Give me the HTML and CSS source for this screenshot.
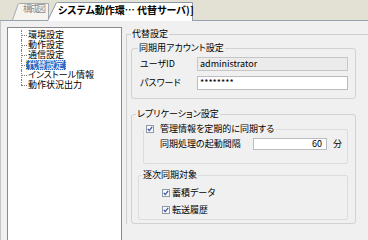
FILE: index.html
```html
<!DOCTYPE html>
<html lang="ja">
<head>
    <meta charset="UTF-8">
    <title>代替設定</title>
    <link rel="stylesheet" href="styles.css">
</head>
<body>
    <div class="tabstrip">
        <div class="tab tab-off">
            <svg class="tab-shape" width="37" height="17" viewBox="0 0 37 17"><path d="M0.5 17 L6 1.5 Q6.4 0.5 7.5 0.5 H36.5 V17" fill="#f5f4ef" stroke="#a4abb3"/></svg>
            <span class="tab-label">構成図</span>
        </div>
        <div class="tab tab-on">
            <svg class="tab-shape" width="146" height="19" viewBox="0 0 146 19"><path d="M0.5 19 L9 1.5 Q9.4 0.5 10.5 0.5 H145.5 V19" fill="#fff" stroke="#8d99a8"/></svg>
            <span class="tab-label">システム動作環… 代替サーバ)]</span>
        </div>
    </div>

    <div class="main">
        <div class="tree">
            <ul>
                <li><span>環境設定</span></li>
                <li><span>動作設定</span></li>
                <li><span>通信設定</span></li>
                <li class="selected"><span>代替設定</span></li>
                <li><span>インストール情報</span></li>
                <li><span>動作状況出力</span></li>
            </ul>
        </div>

        <div class="pane">
            <fieldset class="frame">
                <legend>代替設定</legend>

                <fieldset class="group account">
                    <legend>同期用アカウント設定</legend>
                    <div class="field">
                        <span class="field-label">ユーザID</span>
                        <div class="input readonly">administrator</div>
                    </div>
                    <div class="field">
                        <span class="field-label">パスワード</span>
                        <div class="input">********</div>
                    </div>
                </fieldset>

                <fieldset class="group repl">
                    <legend>レプリケーション設定</legend>

                    <fieldset class="sub periodic">
                        <legend class="check-legend">
                            <svg class="cb" width="8" height="8" viewBox="0 0 8 8"><rect x="0.5" y="0.5" width="7" height="7" fill="#f7f8fa" stroke="#8e99a8"/><path d="M1.8 3.8 L3.3 5.6 L6.2 1.9" fill="none" stroke="#3b4fa0" stroke-width="1.2"/></svg>
                            <span>管理情報を定期的に同期する</span>
                        </legend>
                        <div class="field">
                            <span class="interval-label">同期処理の起動間隔</span>
                            <div class="input num">60</div>
                            <span class="unit">分</span>
                        </div>
                    </fieldset>

                    <fieldset class="sub seq">
                        <legend>逐次同期対象</legend>
                        <div class="check-row">
                            <svg class="cb" width="8" height="8" viewBox="0 0 8 8"><rect x="0.5" y="0.5" width="7" height="7" fill="#f7f8fa" stroke="#8e99a8"/><path d="M1.8 3.8 L3.3 5.6 L6.2 1.9" fill="none" stroke="#3b4fa0" stroke-width="1.2"/></svg>
                            <span>蓄積データ</span>
                        </div>
                        <div class="check-row">
                            <svg class="cb" width="8" height="8" viewBox="0 0 8 8"><rect x="0.5" y="0.5" width="7" height="7" fill="#f7f8fa" stroke="#8e99a8"/><path d="M1.8 3.8 L3.3 5.6 L6.2 1.9" fill="none" stroke="#3b4fa0" stroke-width="1.2"/></svg>
                            <span>転送履歴</span>
                        </div>
                    </fieldset>
                </fieldset>
            </fieldset>
        </div>
    </div>
</body>
</html>
```

FILE: styles.css
```css
* {
    box-sizing: border-box;
}

body {
    margin: 0;
    height: 240px;
    background-color: #f0f0f0;
    font-family: "Noto Sans CJK JP", sans-serif;
    font-size: 9px;
    line-height: 10px;
    color: #000;
    font-feature-settings: "palt";
    overflow: hidden;
}

/* tab strip */
.tabstrip {
    display: flex;
    align-items: flex-end;
    height: 21px;
    padding-left: 12px;
    background-color: #e3e0d4;
    border-bottom: 1px solid #98a3b0;
}
.tab {
    position: relative;
    flex: none;
}
.tab-shape {
    position: absolute;
    left: 0;
    top: 0;
}
.tab-label {
    position: relative;
    display: block;
    white-space: nowrap;
}
.tab-off {
    width: 37px;
    height: 17px;
}
.tab-off .tab-label {
    padding: 1px 0 0 11px;
    color: #8c8c8c;
    letter-spacing: -2px;
}
.tab-on {
    width: 146px;
    height: 19px;
    margin-left: -2px;
    margin-bottom: -1px;
}
.tab-on .tab-label {
    padding: 2px 0 0 11px;
    font-size: 10px;
    line-height: 12px;
    font-weight: 700;
}

/* body */
.main {
    display: flex;
    align-items: flex-start;
    height: 219px;
    overflow: hidden;
    box-shadow: inset 1px 0 #c4c4c4;
}

.tree {
    flex: none;
    width: 115px;
    height: 213px;
    margin: 6px 0 0 7px;
    background-color: #fff;
    border: 1px solid #8a8a8a;
    border-bottom: none;
}
.tree ul {
    list-style: none;
    margin: 0;
    padding: 2px 0 0 14px;
}
.tree li {
    position: relative;
    height: 10px;
    padding-left: 6px;
    white-space: nowrap;
}
.tree li span {
    display: inline-block;
    height: 10px;
    line-height: 10px;
    vertical-align: top;
}
.tree li::before {
    content: '';
    position: absolute;
    left: -1px;
    top: 5px;
    width: 6px;
    border-top: 1px dotted #808080;
}
.tree li::after {
    content: '';
    position: absolute;
    left: -1px;
    top: 0;
    height: 10px;
    border-left: 1px dotted #808080;
}
.tree li:last-child::after {
    height: 5px;
}
.tree li.selected span {
    margin-left: -2px;
    padding: 0 2px;
    background-color: #316ac5;
    color: #fff;
    outline: 1px dotted #d8cf8a;
    outline-offset: -1px;
}

.pane {
    flex: 1;
    min-width: 0;
    padding: 8px 0 0 4px;
}

fieldset {
    margin: 0;
    min-width: 0;
}
legend {
    padding: 0 1px;
    line-height: 10px;
}

.frame {
    border: 1px solid #cfcfcf;
    border-right: none;
    border-bottom: none;
    padding: 4px 12px 0 4px;
}
.frame > legend {
    margin-left: 0;
}

.group {
    border: 1px solid #d2d2d2;
    border-radius: 3px;
}
.account {
    padding: 4px 7px 8px 8px;
}
.account > legend {
    margin-left: -2px;
}
.repl {
    margin-top: 10px;
    padding: 5px 7px 3px 6px;
}
.repl > legend {
    margin-left: -2px;
}

.field {
    display: flex;
    align-items: center;
}
.field + .field {
    margin-top: 5px;
}
.field-label {
    width: 57px;
    flex: none;
}
.input {
    height: 14px;
    flex: none;
    width: 151px;
    padding: 0 2px;
    line-height: 12px;
    background-color: #fff;
    border: 1px solid #b9bcc0;
    white-space: nowrap;
}
.input.readonly {
    background-color: #ebebeb;
    border-color: #c6c6c6;
}

.sub {
    border: 1px solid #dcdcdc;
    border-radius: 2px;
}
.periodic {
    margin-left: 5px;
    padding: 4px 0 13px 16px;
}
.check-legend {
    display: flex;
    align-items: center;
    gap: 6px;
    height: 10px;
    margin-left: -16px;
    padding: 0 2px;
}
.cb {
    flex: none;
    display: block;
}
.interval-label {
    width: 93px;
    flex: none;
}
.input.num {
    width: 74px;
    height: 12px;
    line-height: 10px;
    padding-right: 4px;
    text-align: right;
}
.unit {
    margin-left: 6px;
}

.seq {
    margin-top: 6px;
    padding: 4px 0 1px 23px;
}
.seq > legend {
    margin-left: -20px;
}
.check-row {
    display: flex;
    align-items: center;
    gap: 2px;
    height: 17px;
}
```
